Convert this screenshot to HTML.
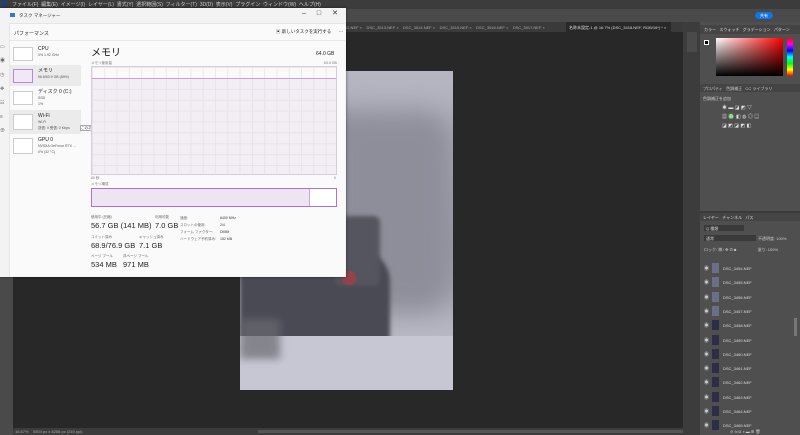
<!DOCTYPE html>
<html><head><meta charset="utf-8"><style>
*{margin:0;padding:0;box-sizing:border-box}
body{width:800px;height:435px;overflow:hidden;background:#282828;font-family:"Liberation Sans","Noto Sans CJK JP",sans-serif;position:relative}
.a{position:absolute}
.t{position:absolute;white-space:nowrap}
</style></head><body>
<!-- menu bar -->
<div class="a" style="left:0;top:0;width:800px;height:9px;background:#3c3c3c"></div>
<div class="t" style="left:12px;top:1px;font-size:5px;color:#ccc">ファイル(F)&nbsp; 編集(E)&nbsp; イメージ(I)&nbsp; レイヤー(L)&nbsp; 書式(Y)&nbsp; 選択範囲(S)&nbsp; フィルター(T)&nbsp; 3D(D)&nbsp; 表示(V)&nbsp; プラグイン&nbsp; ウィンドウ(W)&nbsp; ヘルプ(H)</div>
<div class="a" style="left:1px;top:1px;width:6px;height:6px;background:#1f3f7a"></div>
<!-- options bar -->
<div class="a" style="left:0;top:9px;width:800px;height:13px;background:#4a4a4a"></div>
<div class="a" style="left:755px;top:12px;width:18px;height:7px;border-radius:4px;background:#1473e6"></div>
<div class="t" style="left:760px;top:13px;font-size:4px;color:#fff">共有</div>
<!-- tabs -->
<div class="a" style="left:0;top:22px;width:683px;height:10px;background:#3a3a3a"></div>
<div class="t" style="left:345px;top:25px;font-size:4px;color:#aaa">12.NEF ×&nbsp;&nbsp;&nbsp; DSC_3513.NEF ×&nbsp;&nbsp;&nbsp; DSC_3514.NEF ×&nbsp;&nbsp;&nbsp; DSC_3515.NEF ×&nbsp;&nbsp;&nbsp; DSC_3516.NEF ×&nbsp;&nbsp;&nbsp; DSC_3517.NEF ×</div>
<div class="a" style="left:566px;top:22px;width:105px;height:10px;background:#282828"></div>
<div class="t" style="left:569px;top:25px;font-size:4px;color:#ddd">名称未設定-1 @ 16.7% (DSC_3418.NEF, RGB/16*) * ×</div>
<!-- left toolbar -->
<div class="a" style="left:0;top:22px;width:13px;height:413px;background:#4a4a4a"></div>
<!-- right toolstrip -->
<div class="a" style="left:683px;top:22px;width:17px;height:413px;background:#3c3c3c"></div>
<div class="a" style="left:687px;top:32px;width:10px;height:20px;background:#4a4a4a"></div>
<!-- right panels -->
<div class="a" style="left:700px;top:22px;width:100px;height:413px;background:#4f4f4f"></div>
<div class="a" style="left:700px;top:25px;width:100px;height:9px;background:#444"></div>
<div class="t" style="left:704px;top:27px;font-size:4px;color:#ddd">カラー&nbsp;&nbsp; スウォッチ&nbsp;&nbsp; グラデーション&nbsp;&nbsp; パターン</div>
<div class="a" style="left:716px;top:38px;width:67px;height:38px;background:linear-gradient(to bottom,transparent,#000),linear-gradient(to right,#fff,#ff0000)"></div>
<div class="a" style="left:787px;top:38px;width:6px;height:38px;background:linear-gradient(#f00,#f0f,#00f,#0ff,#0f0,#ff0,#f00)"></div>
<div class="a" style="left:704px;top:40px;width:5px;height:5px;background:#000;border:1px solid #fff"></div>
<div class="a" style="left:700px;top:84px;width:100px;height:8px;background:#444"></div>
<div class="t" style="left:703px;top:86px;font-size:4px;color:#ccc">プロパティ&nbsp;&nbsp; 色調補正&nbsp;&nbsp; CC ライブラリ</div>
<div class="t" style="left:703px;top:96px;font-size:4px;color:#ccc">色調補正を追加</div>
<div class="t" style="left:722px;top:104px;font-size:5px;color:#ddd;line-height:9px">☀ ▬ ◪ ◩ ▽<br>▦ ♎ ◧ ◍ ◎ ▤<br>◪ ◩ ◪ ◩ ◧</div>
<div class="a" style="left:700px;top:211px;width:100px;height:2px;background:#3a3a3a"></div>
<div class="a" style="left:700px;top:213px;width:100px;height:8px;background:#444"></div>
<div class="t" style="left:703px;top:215px;font-size:4px;color:#ddd">レイヤー&nbsp;&nbsp; チャンネル&nbsp;&nbsp; パス</div>
<div class="a" style="left:704px;top:225px;width:40px;height:6px;background:#3a3a3a"></div>
<div class="t" style="left:706px;top:226px;font-size:4px;color:#ccc">Q 種類</div>
<div class="a" style="left:704px;top:235px;width:52px;height:6px;background:#3a3a3a"></div>
<div class="t" style="left:706px;top:236px;font-size:4px;color:#ccc">通常</div>
<div class="t" style="left:758px;top:236px;font-size:4px;color:#ccc">不透明度: 100%</div>
<div class="t" style="left:704px;top:247px;font-size:4px;color:#ccc">ロック: ▩ ⁄ ✥ ⊡ ■&nbsp;&nbsp;&nbsp;&nbsp;&nbsp;&nbsp;&nbsp;&nbsp;&nbsp;&nbsp;&nbsp;&nbsp;&nbsp;&nbsp;&nbsp;&nbsp;&nbsp;&nbsp; 塗り: 100%</div>
<div class="a" style="left:794px;top:318px;width:3px;height:18px;background:#777"></div>
<div id="layers"></div>
<!-- canvas image -->
<div class="a" style="left:240px;top:71px;width:213px;height:319px;overflow:hidden;background:linear-gradient(180deg,#b6b6c3 0%,#a8a8b6 30%,#9a9aa8 55%,#b5b5c2 80%,#c9c9d5 100%)">
  <div class="a" style="left:0;top:30px;width:110px;height:190px;background:#7e7e8a;border-radius:40px;filter:blur(10px)"></div>
  <div class="a" style="left:90px;top:40px;width:123px;height:200px;background:#8e8e9b;border-radius:30px;filter:blur(12px)"></div>
  <div class="a" style="left:0;top:180px;width:150px;height:100px;background:#4a4a55;border-radius:4px 30px 6px 0;filter:blur(2px)"></div>
  <div class="a" style="left:95px;top:145px;width:45px;height:70px;background:#55555f;border-radius:6px;filter:blur(2px)"></div>
  <div class="a" style="left:102px;top:200px;width:14px;height:14px;background:#93424a;border-radius:6px"></div>
  <div class="a" style="left:0;top:265px;width:213px;height:54px;background:#c7c7d3"></div>
  <div class="a" style="left:0;top:248px;width:40px;height:40px;background:#6a6a72;filter:blur(4px);opacity:.7"></div>
</div>
<!-- status bar -->
<div class="a" style="left:13px;top:428px;width:670px;height:7px;background:#3c3c3c"></div>
<div class="t" style="left:15px;top:429px;font-size:4px;color:#aaa">16.67%&nbsp;&nbsp;&nbsp; 5504 px x 8256 px (240 ppi)</div>
<div class="a" style="left:258px;top:430px;width:425px;height:3px;background:#555"></div>
<!-- task manager -->
<div class="a" style="left:0;top:8px;width:346px;height:269px;background:#f3f3f3;box-shadow:0 0 3px rgba(0,0,0,.5)"></div>
<div class="a" style="left:9px;top:23px;width:336px;height:253px;background:#fafafa;border-left:1px solid #e5e5e5;border-top:1px solid #e5e5e5"></div>
<div class="a" style="left:10px;top:13px;width:5px;height:4px;background:#3a78c8"></div>
<div class="t" style="left:19px;top:13px;font-size:4.5px;color:#333">タスク マネージャー</div>
<div class="t" style="left:302px;top:9px;font-size:7px;color:#333;letter-spacing:11px">–□✕</div>
<div class="t" style="left:14px;top:30px;font-size:5px;color:#222">パフォーマンス</div>
<div class="t" style="left:276px;top:29px;font-size:4.5px;color:#222">▣ 新しいタスクを実行する&nbsp;&nbsp;&nbsp;&nbsp;&nbsp; ⋯</div>
<div class="a" style="left:9px;top:40px;width:336px;height:1px;background:#e8e8e8"></div>
<div class="t" style="left:0px;top:40px;font-size:5px;color:#666;line-height:14px">▭<br>◉<br>◷<br>✥<br>☷<br>≡<br>⊕</div>
<!-- left list -->
<div class="a" style="left:10px;top:65px;width:71px;height:21px;background:#ebebeb"></div>
<div class="a" style="left:10px;top:110px;width:71px;height:24px;background:#ebebeb"></div>
<div class="a" style="left:13px;top:47px;width:20px;height:14px;border:1px solid #ccc;background:#fff"></div>
<div class="a" style="left:13px;top:69px;width:20px;height:14px;border:1px solid #b88ad0;background:#f0e8f5"></div>
<div class="a" style="left:13px;top:91px;width:20px;height:14px;border:1px solid #ccc;background:#fff"></div>
<div class="a" style="left:13px;top:114px;width:20px;height:16px;border:1px solid #ccc;background:#fff"></div>
<div class="a" style="left:13px;top:138px;width:20px;height:16px;border:1px solid #ccc;background:#fff"></div>
<div class="t" style="left:38px;top:46px;font-size:5px;color:#222;line-height:6px">CPU<br><span style="font-size:3.5px;color:#555">0% 1.92 GHz</span></div>
<div class="t" style="left:38px;top:68px;font-size:5px;color:#222;line-height:6px">メモリ<br><span style="font-size:3.5px;color:#555">56.8/63.9 GB (89%)</span></div>
<div class="t" style="left:38px;top:89px;font-size:5px;color:#222;line-height:6px">ディスク 0 (C:)<br><span style="font-size:3.5px;color:#555;line-height:4px">SSD<br>1%</span></div>
<div class="t" style="left:38px;top:113px;font-size:5px;color:#222;line-height:6px">Wi-Fi<br><span style="font-size:3.5px;color:#555;line-height:4px">Wi-Fi<br>送信: 0 受信: 0 Kbps</span></div>
<div class="a" style="left:80px;top:125px;width:70px;height:6px;background:#fff;border:1px solid #aaa"></div>
<div class="t" style="left:81px;top:126px;font-size:3.5px;color:#333">このネットワークでの送信および受信処理</div>
<div class="t" style="left:38px;top:137px;font-size:5px;color:#222;line-height:6px">GPU 0<br><span style="font-size:3.5px;color:#555;line-height:4px">NVIDIA GeForce RTX ...<br>0% (32 °C)</span></div>
<!-- right detail -->
<div class="t" style="left:91px;top:44px;font-size:10px;color:#111">メモリ</div>
<div class="t" style="left:316px;top:51px;font-size:5px;color:#222">64.0 GB</div>
<div class="t" style="left:91px;top:61px;font-size:3.5px;color:#777">メモリ使用量</div>
<div class="t" style="left:324px;top:61px;font-size:3.5px;color:#777">63.9 GB</div>
<div class="a" style="left:91px;top:66px;width:246px;height:109px;border:1px solid #d8c8e0;background-color:#fafafa;background-image:linear-gradient(#eaeaea 1px,transparent 1px),linear-gradient(90deg,#eaeaea 1px,transparent 1px);background-size:12.3px 10.9px"></div>
<div class="a" style="left:92px;top:78px;width:244px;height:96px;background:rgba(225,215,232,.35);border-top:1px solid #c7a0dc"></div>
<div class="t" style="left:91px;top:176px;font-size:3.5px;color:#777">60 秒</div>
<div class="t" style="left:334px;top:176px;font-size:3.5px;color:#777">0</div>
<div class="t" style="left:91px;top:182px;font-size:3.5px;color:#777">メモリ構成</div>
<div class="a" style="left:91px;top:188px;width:246px;height:19px;border:1px solid #b070d0;background:#fff"></div>
<div class="a" style="left:92px;top:189px;width:218px;height:17px;background:#eee5f2;border-right:1px solid #c8a8d8"></div>
<div class="t" style="left:91px;top:215px;font-size:3.5px;color:#666">使用中 (圧縮)</div>
<div class="t" style="left:91px;top:221px;font-size:7.5px;color:#222">56.7 GB (141 MB)</div>
<div class="t" style="left:155px;top:215px;font-size:3.5px;color:#666">利用可能</div>
<div class="t" style="left:155px;top:221px;font-size:7.5px;color:#222">7.0 GB</div>
<div class="t" style="left:180px;top:215px;font-size:3.5px;color:#666;line-height:7px">速度:<br>スロットの使用:<br>フォーム ファクター:<br>ハードウェア予約済み:</div>
<div class="t" style="left:220px;top:215px;font-size:3.5px;color:#333;line-height:7px">6400 MHz<br>2/4<br>DIMM<br>152 MB</div>
<div class="t" style="left:91px;top:235px;font-size:3.5px;color:#666">コミット済み</div>
<div class="t" style="left:91px;top:241px;font-size:7.5px;color:#222">68.9/76.9 GB</div>
<div class="t" style="left:139px;top:235px;font-size:3.5px;color:#666">キャッシュ済み</div>
<div class="t" style="left:139px;top:241px;font-size:7.5px;color:#222">7.1 GB</div>
<div class="t" style="left:91px;top:254px;font-size:3.5px;color:#666">ページ プール</div>
<div class="t" style="left:91px;top:260px;font-size:7.5px;color:#222">534 MB</div>
<div class="t" style="left:123px;top:254px;font-size:3.5px;color:#666">非ページ プール</div>
<div class="t" style="left:123px;top:260px;font-size:7.5px;color:#222">971 MB</div>
<script>
var h='';for(var i=0;i<12;i++){var y=263+i*14.3;var n=3454+i;
h+='<div class="t" style="left:704px;top:'+(y+2)+'px;font-size:5px;color:#ccc">◉</div><div class="a" style="left:712px;top:'+y+'px;width:7px;height:10px;background:'+(i<4?'#6a6f88':'#2c2f44')+'"></div><div class="t" style="left:723px;top:'+(y+3)+'px;font-size:4px;color:#ddd">DSC_'+n+'.NEF</div>';}
h+='<div class="t" style="left:730px;top:429px;font-size:4px;color:#ccc">⊝ fx ◘ ◑ ▬ ⊞ 🗑</div>';
document.getElementById('layers').innerHTML=h;
</script>
</body></html>
